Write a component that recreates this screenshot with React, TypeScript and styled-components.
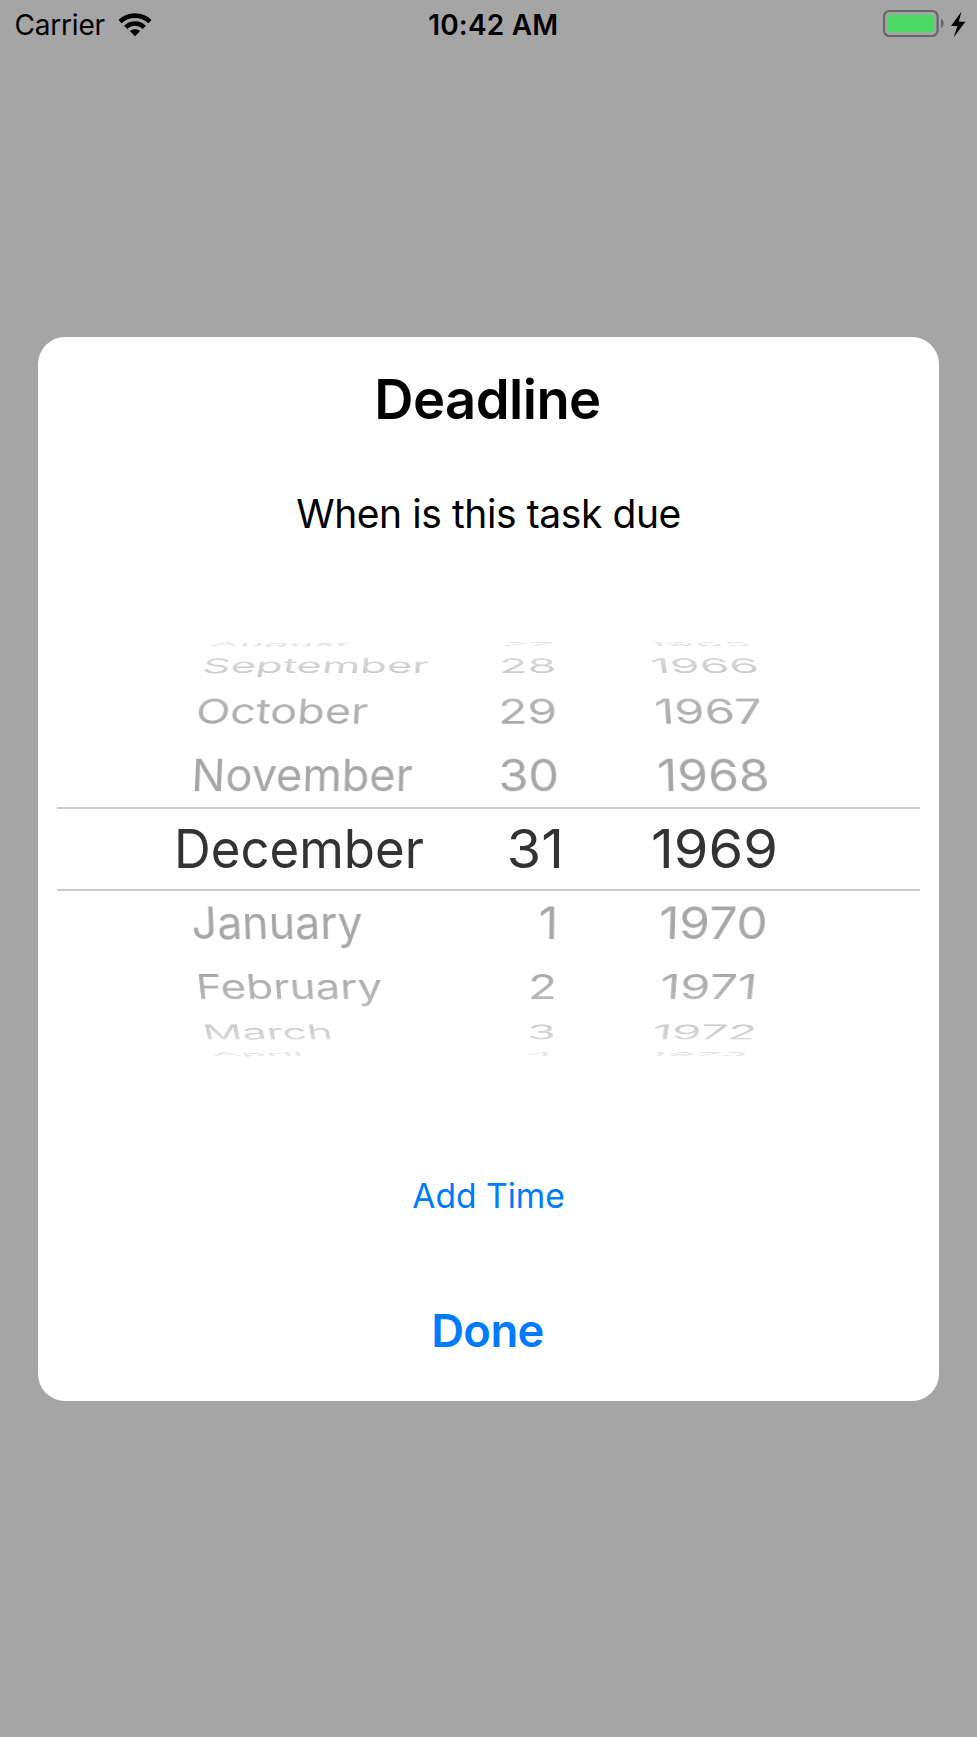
import React from "react";
import styled, { createGlobalStyle } from "styled-components";

const GlobalStyle = createGlobalStyle`
  *, *::before, *::after { box-sizing: border-box; }
  body { margin: 0; background: #a5a5a5; }
  button { border: 0; padding: 0; background: none; font: inherit; cursor: pointer; }
`;

const Screen = styled.main`
  display: flex;
  flex-direction: column;
  align-items: center;
  width: 977px;
  height: 1737px;
  overflow: hidden;
  background: #a5a5a5;
  color: #000;
  font-family: Inter, "Liberation Sans", sans-serif;
`;

const StatusBar = styled.header`
  display: grid;
  grid-template-columns: 1fr auto 1fr;
  align-items: center;
  width: 100%;
  height: 49px;
  padding: 0 11px 0 14.5px;
`;

const Carrier = styled.div`
  display: flex;
  align-items: center;
  gap: 13px;
  font-size: 28px;
  line-height: 34px;
  letter-spacing: -0.2px;
  white-space: nowrap;
`;

const Clock = styled.time`
  padding-left: 6px;
  font-size: 28px;
  font-weight: 600;
  line-height: 34px;
  letter-spacing: 0.2px;
  white-space: nowrap;
`;

const Power = styled.div`
  display: flex;
  align-items: center;
  justify-content: flex-end;
  padding-bottom: 3px;
`;

const Card = styled.section`
  display: flex;
  flex-direction: column;
  align-items: center;
  width: 901px;
  height: 1064px;
  margin-top: 288px;
  padding-top: 32px;
  border-radius: 27px;
  background: #fff;
`;

const Title = styled.h1`
  margin: 0;
  padding-right: 2px;
  font-size: 54.3px;
  font-weight: 600;
  line-height: 60px;
  letter-spacing: -0.55px;
`;

const Message = styled.p`
  margin: 61px 0 0;
  font-size: 39px;
  line-height: 48px;
  letter-spacing: -0.42px;
`;

const Wheel = styled.div`
  display: grid;
  align-items: center;
  width: 863px;
  height: 418px;
  margin-top: 102px;
  overflow: hidden;
  mask-image: linear-gradient(
    to bottom,
    rgba(0, 0, 0, 0.24) 0,
    rgba(0, 0, 0, 0.56) 30px,
    rgba(0, 0, 0, 0.82) 60px,
    #000 90px,
    #000 328px,
    rgba(0, 0, 0, 0.82) 358px,
    rgba(0, 0, 0, 0.56) 388px,
    rgba(0, 0, 0, 0.24) 418px
  );
`;

const WheelRow = styled.div<{ $y: number; $z: number; $angle: number }>`
  grid-area: 1 / 1;
  display: grid;
  grid-template-columns: 320px 148.5px 1fr;
  align-items: center;
  height: 70px;
  padding-left: 133px;
  color: #a7a7a7;
  font-size: 48.4px;
  line-height: 70px;
  white-space: nowrap;
  transform: perspective(2300px)
    translate3d(0, ${(p) => p.$y}px, ${(p) => p.$z}px)
    rotateX(${(p) => p.$angle}deg);
`;

const SelectedRow = styled.div`
  grid-area: 1 / 1;
  display: grid;
  grid-template-columns: 328.5px 148.5px 1fr;
  align-items: center;
  height: 84px;
  padding-left: 117px;
  border: solid #ccc;
  border-width: 2px 0;
  color: #333;
  font-size: 53.6px;
  line-height: 80px;
  white-space: nowrap;
`;

const Month = styled.span<{ $stretch: number }>`
  justify-self: start;
  transform: scaleX(${(p) => p.$stretch});
  transform-origin: left center;
`;

const Day = styled.span<{ $selected?: boolean }>`
  justify-self: end;
  margin-right: ${(p) => (p.$selected ? 87 : 99.5)}px;
  transform: scaleX(${(p) => (p.$selected ? 1.04 : 1.01)});
  transform-origin: right center;
`;

const Year = styled.span<{ $stretch: number; $indent?: number }>`
  justify-self: start;
  margin-left: ${(p) => p.$indent ?? 0}px;
  transform: scaleX(${(p) => p.$stretch});
  transform-origin: left center;
`;

const AddTime = styled.button`
  && {
    margin-top: 118px;
    color: #007aff;
    font-size: 33.6px;
    line-height: 40px;
    letter-spacing: 0;
  }
`;

const Done = styled.button`
  && {
    margin-top: 87px;
    padding-right: 2px;
    color: #007aff;
    font-size: 45.4px;
    font-weight: 600;
    line-height: 56px;
    letter-spacing: -0.6px;
  }
`;

type Entry = {
  month: string;
  stretch: number;
  day: number;
  year: number;
  indent: number;
  y: number;
  z: number;
  angle: number;
};

const rows: Entry[] = [
  { month: "August", stretch: 0.92, day: 27, year: 1965, indent: 0, y: -220.4, z: -175, angle: 78.5 },
  { month: "September", stretch: 0.941, day: 28, year: 1966, indent: -1, y: -191.5, z: -104, angle: 59 },
  { month: "October", stretch: 0.948, day: 29, year: 1967, indent: -1, y: -140.5, z: -49, angle: 39.5 },
  { month: "November", stretch: 0.936, day: 30, year: 1968, indent: -0.5, y: -74, z: -12, angle: 19.5 },
  { month: "January", stretch: 0.928, day: 1, year: 1970, indent: 1, y: 74.6, z: -12, angle: -19.5 },
  { month: "February", stretch: 0.928, day: 2, year: 1971, indent: 5, y: 141, z: -49, angle: -39.5 },
  { month: "March", stretch: 0.937, day: 3, year: 1972, indent: 1.5, y: 191.5, z: -104, angle: -59 },
  { month: "April", stretch: 0.94, day: 4, year: 1973, indent: 1, y: 220.8, z: -175, angle: -78.5 },
];

const WifiIcon = () => (
  <svg width="34" height="24" viewBox="0 0 34 24" aria-hidden="true">
    <g fill="none" stroke="#000" strokeWidth="4.6">
      <path d="M2 8.6C10.4 0.6 23.6 0.6 32 8.6" />
      <path d="M7.7 14.3C13 9.3 21 9.3 26.3 14.3" />
    </g>
    <path d="M17 23.2L11.9 18.1C14.7 15.5 19.3 15.5 22.1 18.1Z" />
  </svg>
);

const BatteryIcon = () => (
  <svg width="84" height="30" viewBox="0 0 84 30" aria-hidden="true">
    <rect x="2" y="3" width="53.6" height="25" rx="5.5" fill="none" stroke="#666" strokeWidth="2.2" />
    <rect x="5.2" y="6.8" width="47" height="17.4" rx="2" fill="#4cd964" />
    <path d="M59 10.8C62.5 12.4 62.5 18.6 59 20.2Z" fill="#666" />
    <path d="M79.5 3.6L69 18H75.5L71.7 29.2L83.4 13.8H76.8Z" />
  </svg>
);

export default function App() {
  return (
    <Screen>
      <GlobalStyle />
      <StatusBar>
        <Carrier>
          <span>Carrier</span>
          <WifiIcon />
        </Carrier>
        <Clock>10:42 AM</Clock>
        <Power>
          <BatteryIcon />
        </Power>
      </StatusBar>
      <Card>
        <Title>Deadline</Title>
        <Message>When is this task due</Message>
        <Wheel>
          {rows.map((r) => (
            <WheelRow key={r.month} $y={r.y} $z={r.z} $angle={r.angle}>
              <Month $stretch={r.stretch}>{r.month}</Month>
              <Day>{r.day}</Day>
              <Year $stretch={1.03} $indent={r.indent}>
                {r.year}
              </Year>
            </WheelRow>
          ))}
          <SelectedRow>
            <Month $stretch={0.95}>December</Month>
            <Day $selected>31</Day>
            <Year $stretch={1.045}>1969</Year>
          </SelectedRow>
        </Wheel>
        <AddTime>Add Time</AddTime>
        <Done>Done</Done>
      </Card>
    </Screen>
  );
}
